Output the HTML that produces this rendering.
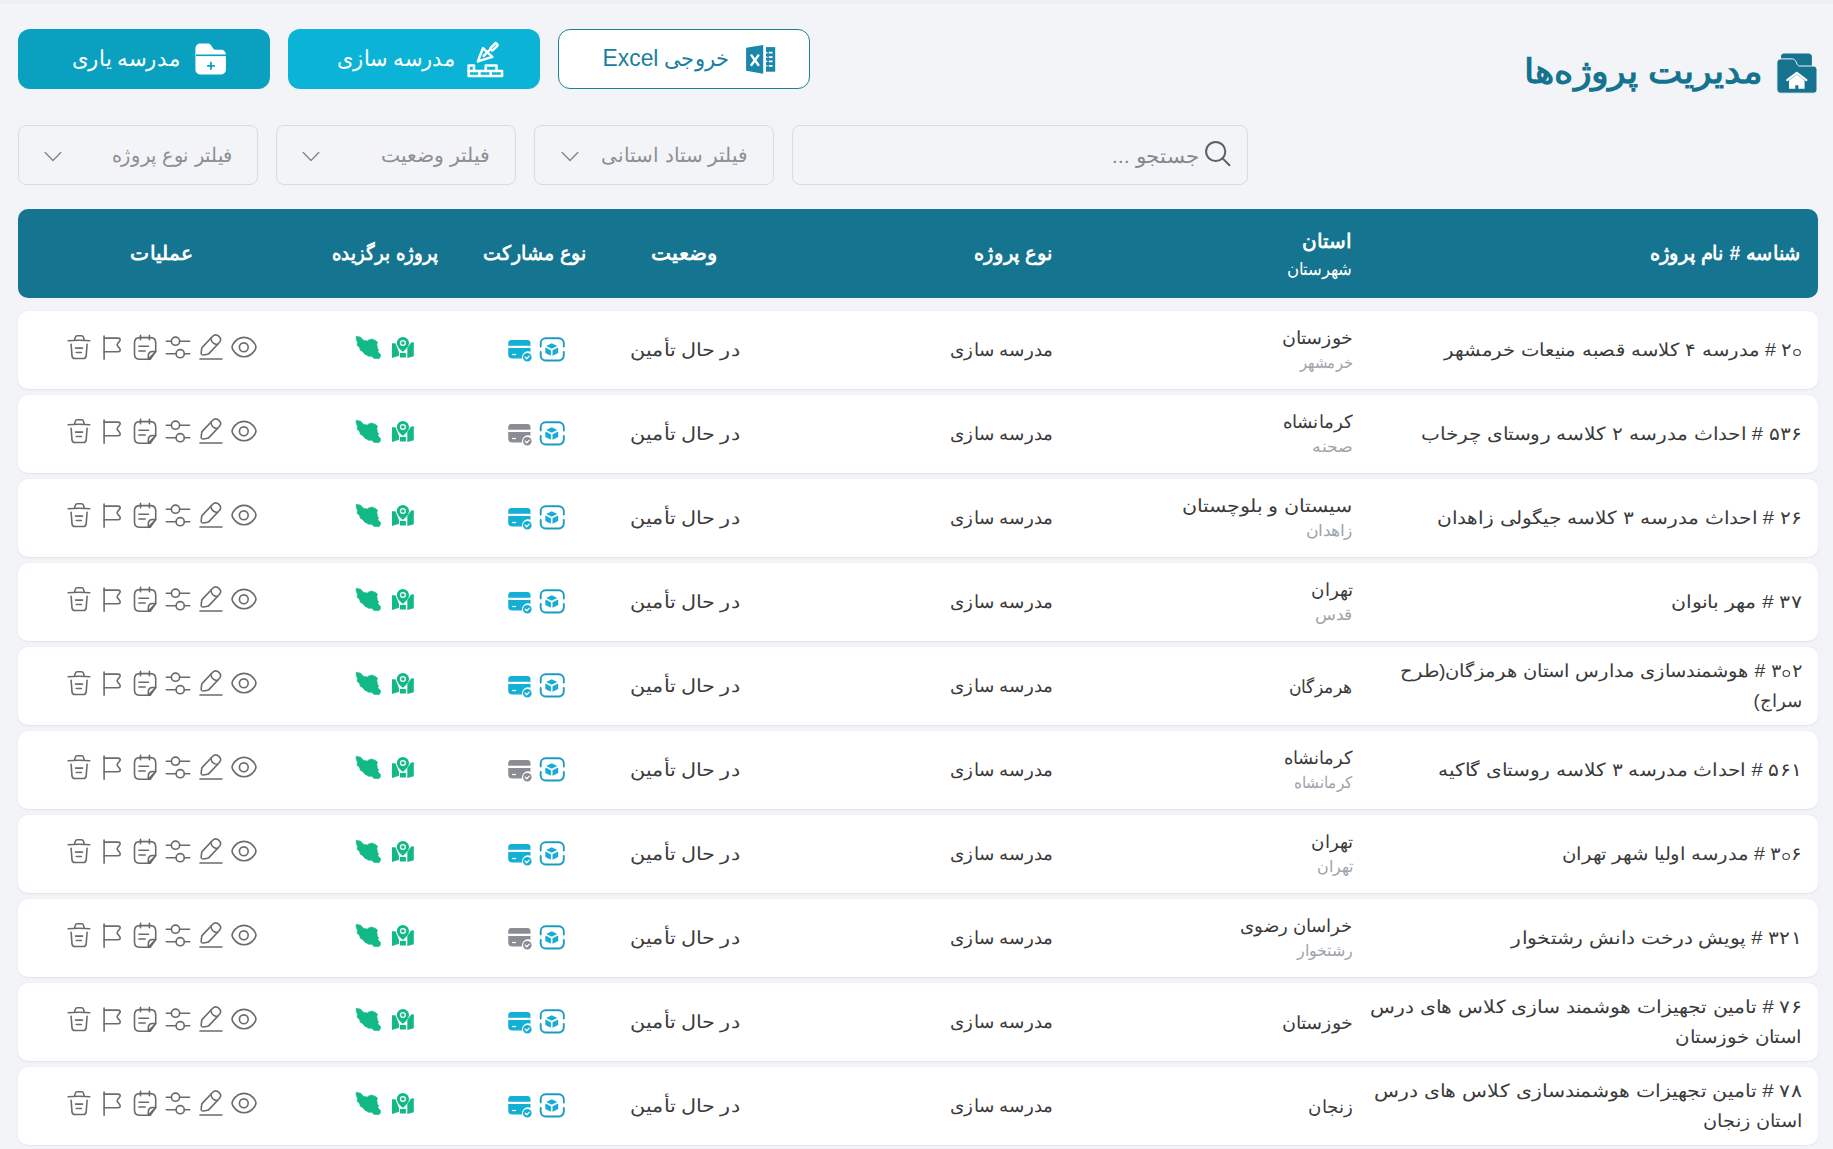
<!DOCTYPE html><html dir="rtl" lang="fa"><head><meta charset="utf-8"><title>مدیریت پروژه‌ها</title><style>
html,body{margin:0;padding:0}
body{width:1833px;height:1149px;position:relative;overflow:hidden;background:#f3f4f8;font-family:"Liberation Sans",sans-serif;direction:rtl}
.topband{position:absolute;left:0;top:0;width:1833px;height:4px;background:#eeeff2}
.t{position:absolute;white-space:nowrap;transform-origin:100% 50%;display:block}
.ic{position:absolute;display:block}
.num{unicode-bidi:isolate;direction:ltr}
.z{display:inline-block;width:7.4px;height:7.4px;box-sizing:border-box;border:1.6px solid currentColor;border-radius:50%;margin:0 1px;vertical-align:0px}
.btn{position:absolute;top:29px;width:252px;height:60px;border-radius:12px;box-sizing:border-box}
.inp{position:absolute;top:125px;height:60px;border:1px solid #d9dbe0;border-radius:8px;box-sizing:border-box}
.thead{position:absolute;left:18px;top:209px;width:1800px;height:89px;background:#15748f;border-radius:10px}
.row{position:absolute;left:18px;width:1800px;height:78px;background:#fff;border-radius:10px;box-shadow:0 0.5px 2px rgba(0,0,0,.07)}
</style></head><body><div class="topband"></div>
<span id="title" class="t" style="right:71.00px;top:54.00px;font-size:34px;line-height:34px;color:#15738f;font-weight:700;transform:scaleX(1.0769);">مدیریت پروژه‌ها</span>
<svg class="ic" style="left:1770px;top:45px" width="55" height="55" viewBox="0 0 55 55">
<path d="M14 8.4h24.4a3.5 3.5 0 0 1 3.5 3.5V24H11V11.4A3 3 0 0 1 14 8.4z" fill="#15738f"/>
<path d="M10 13.9h12.4c1.6 0 2.6 .8 3.3 2.2l1.6 3.4c.5 1.1 1.3 1.5 2.6 1.5h13.7a3.4 3.4 0 0 1 3.4 3.4v20.4a3.4 3.4 0 0 1-3.4 3.4H10.3a3.4 3.4 0 0 1-3.4-3.4V17.3a3.4 3.4 0 0 1 3.1-3.4z" fill="#15738f" stroke="#f3f4f8" stroke-width="1"/>
<path d="M17.2 35.2l9.6-7.4 9.6 7.4" fill="none" stroke="#fff" stroke-width="2.2" stroke-linecap="round" stroke-linejoin="round"/>
<path d="M19 35.4l7.8-6 7.8 6v8.4h-6.3v-3.6h-3v3.6H19z" fill="#fff"/>
</svg>
<div class="btn" style="left:18px;background:#0aa1c1"></div>
<div class="btn" style="left:288px;background:#0bb4d6"></div>
<div class="btn" style="left:558px;background:#fff;border:1px solid #1d7f9b"></div>
<span id="b1" class="t" style="right:1653.00px;top:48.00px;font-size:22px;line-height:22px;color:#fff;font-weight:400;transform:scaleX(0.9643);">مدرسه یاری</span>
<span id="b2" class="t" style="right:1377.70px;top:48.00px;font-size:22px;line-height:22px;color:#fff;font-weight:400;transform:scaleX(0.9516);">مدرسه سازی</span>
<span id="b3" class="t" style="right:1103.30px;top:47.00px;font-size:22px;line-height:22px;color:#1b80a0;font-weight:400;transform:scaleX(0.9507);">خروجی <span style="font-size:24px">Excel</span></span>
<svg class="ic" style="left:190px;top:38px" width="42" height="42" viewBox="0 0 42 42">
<path d="M10 5.6h7.6c1.6 0 2.6.6 3.4 1.7l2.4 3.4c.6.8 1.3 1.1 2.5 1.1h5.4a4.6 4.6 0 0 1 4.6 4.6v15.4a4.6 4.6 0 0 1-4.6 4.6H10a4.6 4.6 0 0 1-4.6-4.6V10.2A4.6 4.6 0 0 1 10 5.6z" fill="#fff"/>
<path d="M6 17.3h30" stroke="#0aa1c1" stroke-width="1.6"/>
<path d="M21 24.6v6.4M17.8 27.8h6.4" stroke="#0aa1c1" stroke-width="1.8" stroke-linecap="round"/>
</svg>
<svg class="ic" style="left:460px;top:35px" width="55" height="50" viewBox="0 0 55 50" fill="none" stroke="#fff" stroke-width="2.5" stroke-linejoin="round" stroke-linecap="round">
<path d="M8.6 35.9h33.5v5.2H8.6zM19.45 35.9v5.2M30.65 35.9v5.2"/>
<path d="M8.6 35.9v-5.4H14v5.4M25.7 35.9v-5.3h10.85v5.3"/>
<path d="M17.9 26.4l5-13.2 9.4 8.7z"/>
<path d="M23.6 21l5.6-5.6"/>
<rect x="-4.05" y="-1.6" width="8.1" height="3.2" rx="1" transform="translate(34 11.8) rotate(-45)"/>
</svg>
<svg class="ic" style="left:740px;top:40px" width="40" height="40" viewBox="0 0 40 40">
<path d="M6.1 7.8L23.2 5v28.8L6.1 30.8z" fill="#1b87aa"/>
<path d="M10.9 14.6l8 11.2M18.9 14.6l-8 11.2" stroke="#fff" stroke-width="2.4"/>
<path d="M26 7.1h9.2v24.6H26z" fill="#1b87aa"/>
<path d="M28.8 12.7h3.8M28.8 17.1h3.8M28.8 21.4h3.8M28.8 25.9h3.8" stroke="#fff" stroke-width="1.8"/>
<path d="M26 12.7h1.4M26 17.1h1.4M26 21.4h1.4M26 25.9h1.4" stroke="#fff" stroke-width="1.4"/>
</svg>
<div class="inp" style="left:792px;width:456px"></div>
<div class="inp" style="left:534px;width:240px"></div>
<div class="inp" style="left:276px;width:240px"></div>
<div class="inp" style="left:18px;width:240px"></div>
<span id="s" class="t" style="right:634.00px;top:146.00px;font-size:20px;line-height:20px;color:#85878c;font-weight:400;transform:scaleX(1.0765);">جستجو ...</span>
<svg class="ic" style="left:1200px;top:136px" width="36" height="36" viewBox="0 0 36 36" fill="none" stroke="#5d6067" stroke-width="2">
<circle cx="15.7" cy="15.5" r="9.6"/><path d="M22.6 22.4l6.9 6.9" stroke-linecap="round"/></svg>
<span id="f1" class="t" style="right:1084.40px;top:145.00px;font-size:20px;line-height:20px;color:#8d8f94;font-weight:400;transform:scaleX(0.9973);">فیلتر ستاد استانی</span>
<span id="f2" class="t" style="right:1342.50px;top:145.00px;font-size:20px;line-height:20px;color:#8d8f94;font-weight:400;transform:scaleX(1.0138);">فیلتر وضعیت</span>
<span id="f3" class="t" style="right:1600.30px;top:145.00px;font-size:20px;line-height:20px;color:#8d8f94;font-weight:400;transform:scaleX(0.9627);">فیلتر نوع پروژه</span>
<svg class="ic" style="left:43.4px;top:146px" width="20" height="20" viewBox="0 0 20 20"><path d="M2.2 6.4l7.8 8 7.8-8" fill="none" stroke="#84868c" stroke-width="1.4" stroke-linecap="round" stroke-linejoin="round"/></svg>
<svg class="ic" style="left:301.4px;top:146px" width="20" height="20" viewBox="0 0 20 20"><path d="M2.2 6.4l7.8 8 7.8-8" fill="none" stroke="#84868c" stroke-width="1.4" stroke-linecap="round" stroke-linejoin="round"/></svg>
<svg class="ic" style="left:559.5px;top:146px" width="20" height="20" viewBox="0 0 20 20"><path d="M2.2 6.4l7.8 8 7.8-8" fill="none" stroke="#84868c" stroke-width="1.4" stroke-linecap="round" stroke-linejoin="round"/></svg>
<div class="thead"></div>
<span id="h1" class="t" style="right:32.00px;top:243.00px;font-size:20px;line-height:20px;color:#fff;font-weight:700;transform:scaleX(0.9679);">شناسه # نام پروژه</span>
<span id="h2" class="t" style="right:481.00px;top:231.00px;font-size:20px;line-height:20px;color:#fff;font-weight:700;transform:scaleX(1.0000);">استان</span>
<span id="h2b" class="t" style="right:481.00px;top:261.00px;font-size:17px;line-height:17px;color:#fff;font-weight:400;transform:scaleX(0.9701);">شهرستان</span>
<span id="h3" class="t" style="right:780.00px;top:243.00px;font-size:20px;line-height:20px;color:#fff;font-weight:700;transform:scaleX(0.9691);">نوع پروژه</span>
<span id="h4" class="t" style="right:1115.00px;top:243.00px;font-size:20px;line-height:20px;color:#fff;font-weight:700;transform:scaleX(1.0635);">وضعیت</span>
<span id="h5" class="t" style="right:1246.00px;top:243.00px;font-size:20px;line-height:20px;color:#fff;font-weight:700;transform:scaleX(0.9495);">نوع مشارکت</span>
<span id="h6" class="t" style="right:1394.00px;top:243.00px;font-size:20px;line-height:20px;color:#fff;font-weight:700;transform:scaleX(0.9068);">پروژه برگزیده</span>
<span id="h7" class="t" style="right:1640.30px;top:243.00px;font-size:20px;line-height:20px;color:#fff;font-weight:700;transform:scaleX(1.0113);">عملیات</span>
<div class="row" style="top:311px"></div>
<svg class="ic" style="left:64px;top:330px" width="200" height="36" viewBox="0 0 200 36" fill="none" stroke="#6b6b6b" stroke-width="1.6" stroke-linecap="round" stroke-linejoin="round">
<path d="M4.2 10.8c7-.7 14.4-.8 21.5 0"/><path d="M10.6 10.2l.6-2.6c.3-1.2.8-1.8 2.2-1.8h4c1.4 0 1.9.6 2.2 1.8l.6 2.6"/>
<path d="M7.1 14.2l.9 11.6c.2 1.8.6 2.7 3 2.7h8.2c2.4 0 2.8-.9 3-2.7l.9-11.6"/><path d="M11.5 18.1h7.1M12.3 22.5h5"/>
<path d="M40.1 6v23.3"/><path d="M40.1 8.1h13.6c2.6 0 3.3 1.4 1.6 3.4l-1.5 1.8c-.8 1-.8 2 0 3l1.5 1.8c1.7 2 1 3.6-1.6 3.6H40.1"/>
<path d="M76.5 5.2v4.6M85.4 5.2v4.6"/><path d="M86.2 29.3H75.8c-3.6 0-5.3-2-5.3-5.3V12.8c0-3.2 1.7-5.2 5.3-5.2h10.6c3.6 0 5.3 2 5.3 5.2v8.7z"/>
<path d="M91.7 21.5l-7.4 7.8v-3.2c0-3 1.4-4.6 4.4-4.6z"/><path d="M74.9 16.2h9.7M74.9 21h6.3"/>
<path d="M6.3 11.2h5M19.6 11.2h10.1M6.3 23.7h9.8M24.3 23.7h5.4" transform="translate(96 0)"/>
<circle cx="111.5" cy="11.2" r="4.1"/><circle cx="116.2" cy="23.7" r="4.1"/>
<g transform="translate(132.3 2.1) scale(1.22)" stroke-width="1.31"><path d="M13.26 3.6L5.05 12.29c-.31.33-.61.98-.67 1.43l-.37 3.24c-.13 1.17.71 1.97 1.87 1.77l3.22-.55c.45-.08 1.08-.41 1.39-.75l8.21-8.69c1.42-1.5 2.06-3.21-.15-5.3-2.2-2.07-3.87-1.34-5.29.16z"/><path d="M11.89 5.05a6.126 6.126 0 0 0 5.45 5.15M3 22h18"/></g>
<circle cx="179.8" cy="17.3" r="4.4"/>
<path d="M180 26.8c4.3 0 8.2-2.5 11-6.8 1-1.6 1-4.2 0-5.8-2.8-4.3-6.7-6.8-11-6.8s-8.2 2.5-11 6.8c-1 1.6-1 4.2 0 5.8 2.8 4.3 6.7 6.8 11 6.8z"/>
</svg>
<svg class="ic" style="left:350px;top:330px" width="70" height="35" viewBox="0 0 70 35">
<path d="M6.2 6.2L10.6 7.2 11.9 8.5 13.7 10.6 17.7 10.9 19 9.8 21.8 9 25.5 10.4 27.6 12.2 26.8 14.3 27.6 18.7 28.6 19.8 27.8 21.8 30.7 24.7 30.2 27.1 29.2 28.6 23.9 28.4 21.8 26.3 18.7 26.3 14.5 23.9 13 21.8 10.4 20.3 9.6 17.7 7 15.1 7.5 12.4 6.2 9.3z" fill="#12b986" stroke="#12b986" stroke-width="0.6" stroke-linejoin="round"/>
<path d="M52.9 6.9a6.1 6.1 0 0 0-6.1 6.1c0 3.6 3.4 6.6 6.1 8.8 2.7-2.2 6.1-5.2 6.1-8.8a6.1 6.1 0 0 0-6.1-6.1z" fill="#12b986"/>
<circle cx="52.9" cy="13" r="2.4" fill="none" stroke="#fff" stroke-width="1.3"/>
<path d="M42 13.2h3.4l3.6 8.8v3.7L42 27.9z" fill="#12b986"/>
<path d="M50 22.9h5.9v4.6H50z" fill="#12b986"/>
<path d="M57.3 18l3.8-5.4 2.7-.4v14.1l-6.5 1.6z" fill="#12b986"/>
</svg>
<svg class="ic" style="left:500px;top:330px" width="70" height="40" viewBox="0 0 70 40">
<path d="M11.4 10.1h15.9a3.2 3.2 0 0 1 3.2 3.2v2.4H8.2v-2.4a3.2 3.2 0 0 1 3.2-3.2z" fill="#14b0d4"/>
<path d="M8.2 18.1h22.3v3.6a6.3 6.3 0 0 0-8.5 6.9H12.2a4 4 0 0 1-4-4z" fill="#14b0d4"/>
<path d="M12 24.5h4" stroke="#fff" stroke-width="1.2"/>
<circle cx="27.3" cy="27.3" r="4.3" fill="#14b0d4"/>
<path d="M25.3 27.3l1.4 1.4 2.6-2.6" fill="none" stroke="#fff" stroke-width="1.3" stroke-linecap="round" stroke-linejoin="round"/>
<path d="M40.7 16.6v-3.4a5 5 0 0 1 5-5h13.1a5 5 0 0 1 5 5v3.4M40.7 22v3.5a5 5 0 0 0 5 5h13.1a5 5 0 0 0 5-5V22" fill="none" stroke="#1c9cc2" stroke-width="1.9" stroke-linecap="round"/>
<path d="M46.2 16l5.5-2.8 5.6 2.8-5.6 2.8z" fill="#17acd8"/>
<path d="M45.3 17.4l5.6 2.9v5.5l-5.6-2.9z" fill="#17acd8"/>
<path d="M52.5 20.3l5.7-2.9v5.6l-5.7 2.8z" fill="#17acd8"/>
</svg>
<span id="st0" class="t" style="right:1093.30px;top:341.00px;font-size:18px;line-height:18px;color:#3b3b3b;font-weight:400;transform:scaleX(1.1547);">در حال تأمین</span>
<span id="ty0" class="t" style="right:780.20px;top:341.00px;font-size:18px;line-height:18px;color:#3b3b3b;font-weight:400;transform:scaleX(1.0178);">مدرسه سازی</span>
<span id="pv0" class="t" style="right:480.50px;top:329.00px;font-size:18px;line-height:18px;color:#3b3b3b;font-weight:400;transform:scaleX(1.0597);">خوزستان</span>
<span id="ct0" class="t" style="right:480.50px;top:355.00px;font-size:16px;line-height:16px;color:#a0a4ab;font-weight:400;transform:scaleX(0.9138);">خرمشهر</span>
<span id="nm0" class="t" style="right:31.00px;top:341.00px;font-size:18px;line-height:18px;color:#3b3b3b;font-weight:400;transform:scaleX(1.0899);"><span class='num'>۲<i class='z'></i></span> # مدرسه ۴ کلاسه قصبه منیعات خرمشهر</span>
<div class="row" style="top:395px"></div>
<svg class="ic" style="left:64px;top:414px" width="200" height="36" viewBox="0 0 200 36" fill="none" stroke="#6b6b6b" stroke-width="1.6" stroke-linecap="round" stroke-linejoin="round">
<path d="M4.2 10.8c7-.7 14.4-.8 21.5 0"/><path d="M10.6 10.2l.6-2.6c.3-1.2.8-1.8 2.2-1.8h4c1.4 0 1.9.6 2.2 1.8l.6 2.6"/>
<path d="M7.1 14.2l.9 11.6c.2 1.8.6 2.7 3 2.7h8.2c2.4 0 2.8-.9 3-2.7l.9-11.6"/><path d="M11.5 18.1h7.1M12.3 22.5h5"/>
<path d="M40.1 6v23.3"/><path d="M40.1 8.1h13.6c2.6 0 3.3 1.4 1.6 3.4l-1.5 1.8c-.8 1-.8 2 0 3l1.5 1.8c1.7 2 1 3.6-1.6 3.6H40.1"/>
<path d="M76.5 5.2v4.6M85.4 5.2v4.6"/><path d="M86.2 29.3H75.8c-3.6 0-5.3-2-5.3-5.3V12.8c0-3.2 1.7-5.2 5.3-5.2h10.6c3.6 0 5.3 2 5.3 5.2v8.7z"/>
<path d="M91.7 21.5l-7.4 7.8v-3.2c0-3 1.4-4.6 4.4-4.6z"/><path d="M74.9 16.2h9.7M74.9 21h6.3"/>
<path d="M6.3 11.2h5M19.6 11.2h10.1M6.3 23.7h9.8M24.3 23.7h5.4" transform="translate(96 0)"/>
<circle cx="111.5" cy="11.2" r="4.1"/><circle cx="116.2" cy="23.7" r="4.1"/>
<g transform="translate(132.3 2.1) scale(1.22)" stroke-width="1.31"><path d="M13.26 3.6L5.05 12.29c-.31.33-.61.98-.67 1.43l-.37 3.24c-.13 1.17.71 1.97 1.87 1.77l3.22-.55c.45-.08 1.08-.41 1.39-.75l8.21-8.69c1.42-1.5 2.06-3.21-.15-5.3-2.2-2.07-3.87-1.34-5.29.16z"/><path d="M11.89 5.05a6.126 6.126 0 0 0 5.45 5.15M3 22h18"/></g>
<circle cx="179.8" cy="17.3" r="4.4"/>
<path d="M180 26.8c4.3 0 8.2-2.5 11-6.8 1-1.6 1-4.2 0-5.8-2.8-4.3-6.7-6.8-11-6.8s-8.2 2.5-11 6.8c-1 1.6-1 4.2 0 5.8 2.8 4.3 6.7 6.8 11 6.8z"/>
</svg>
<svg class="ic" style="left:350px;top:414px" width="70" height="35" viewBox="0 0 70 35">
<path d="M6.2 6.2L10.6 7.2 11.9 8.5 13.7 10.6 17.7 10.9 19 9.8 21.8 9 25.5 10.4 27.6 12.2 26.8 14.3 27.6 18.7 28.6 19.8 27.8 21.8 30.7 24.7 30.2 27.1 29.2 28.6 23.9 28.4 21.8 26.3 18.7 26.3 14.5 23.9 13 21.8 10.4 20.3 9.6 17.7 7 15.1 7.5 12.4 6.2 9.3z" fill="#12b986" stroke="#12b986" stroke-width="0.6" stroke-linejoin="round"/>
<path d="M52.9 6.9a6.1 6.1 0 0 0-6.1 6.1c0 3.6 3.4 6.6 6.1 8.8 2.7-2.2 6.1-5.2 6.1-8.8a6.1 6.1 0 0 0-6.1-6.1z" fill="#12b986"/>
<circle cx="52.9" cy="13" r="2.4" fill="none" stroke="#fff" stroke-width="1.3"/>
<path d="M42 13.2h3.4l3.6 8.8v3.7L42 27.9z" fill="#12b986"/>
<path d="M50 22.9h5.9v4.6H50z" fill="#12b986"/>
<path d="M57.3 18l3.8-5.4 2.7-.4v14.1l-6.5 1.6z" fill="#12b986"/>
</svg>
<svg class="ic" style="left:500px;top:414px" width="70" height="40" viewBox="0 0 70 40">
<path d="M11.4 10.1h15.9a3.2 3.2 0 0 1 3.2 3.2v2.4H8.2v-2.4a3.2 3.2 0 0 1 3.2-3.2z" fill="#8a8d93"/>
<path d="M8.2 18.1h22.3v3.6a6.3 6.3 0 0 0-8.5 6.9H12.2a4 4 0 0 1-4-4z" fill="#8a8d93"/>
<path d="M12 24.5h4" stroke="#fff" stroke-width="1.2"/>
<circle cx="27.3" cy="27.3" r="4.3" fill="#8a8d93"/>
<path d="M25.3 27.3l1.4 1.4 2.6-2.6" fill="none" stroke="#fff" stroke-width="1.3" stroke-linecap="round" stroke-linejoin="round"/>
<path d="M40.7 16.6v-3.4a5 5 0 0 1 5-5h13.1a5 5 0 0 1 5 5v3.4M40.7 22v3.5a5 5 0 0 0 5 5h13.1a5 5 0 0 0 5-5V22" fill="none" stroke="#1c9cc2" stroke-width="1.9" stroke-linecap="round"/>
<path d="M46.2 16l5.5-2.8 5.6 2.8-5.6 2.8z" fill="#17acd8"/>
<path d="M45.3 17.4l5.6 2.9v5.5l-5.6-2.9z" fill="#17acd8"/>
<path d="M52.5 20.3l5.7-2.9v5.6l-5.7 2.8z" fill="#17acd8"/>
</svg>
<span id="st1" class="t" style="right:1093.30px;top:425.00px;font-size:18px;line-height:18px;color:#3b3b3b;font-weight:400;transform:scaleX(1.1547);">در حال تأمین</span>
<span id="ty1" class="t" style="right:780.20px;top:425.00px;font-size:18px;line-height:18px;color:#3b3b3b;font-weight:400;transform:scaleX(1.0178);">مدرسه سازی</span>
<span id="pv1" class="t" style="right:480.50px;top:413.00px;font-size:18px;line-height:18px;color:#3b3b3b;font-weight:400;transform:scaleX(1.0145);">کرمانشاه</span>
<span id="ct1" class="t" style="right:480.50px;top:439.00px;font-size:16px;line-height:16px;color:#a0a4ab;font-weight:400;transform:scaleX(1.0789);">صحنه</span>
<span id="nm1" class="t" style="right:31.00px;top:425.00px;font-size:18px;line-height:18px;color:#3b3b3b;font-weight:400;transform:scaleX(1.1173);">۵۳۶ # احداث مدرسه ۲ کلاسه روستای چرخاب</span>
<div class="row" style="top:479px"></div>
<svg class="ic" style="left:64px;top:498px" width="200" height="36" viewBox="0 0 200 36" fill="none" stroke="#6b6b6b" stroke-width="1.6" stroke-linecap="round" stroke-linejoin="round">
<path d="M4.2 10.8c7-.7 14.4-.8 21.5 0"/><path d="M10.6 10.2l.6-2.6c.3-1.2.8-1.8 2.2-1.8h4c1.4 0 1.9.6 2.2 1.8l.6 2.6"/>
<path d="M7.1 14.2l.9 11.6c.2 1.8.6 2.7 3 2.7h8.2c2.4 0 2.8-.9 3-2.7l.9-11.6"/><path d="M11.5 18.1h7.1M12.3 22.5h5"/>
<path d="M40.1 6v23.3"/><path d="M40.1 8.1h13.6c2.6 0 3.3 1.4 1.6 3.4l-1.5 1.8c-.8 1-.8 2 0 3l1.5 1.8c1.7 2 1 3.6-1.6 3.6H40.1"/>
<path d="M76.5 5.2v4.6M85.4 5.2v4.6"/><path d="M86.2 29.3H75.8c-3.6 0-5.3-2-5.3-5.3V12.8c0-3.2 1.7-5.2 5.3-5.2h10.6c3.6 0 5.3 2 5.3 5.2v8.7z"/>
<path d="M91.7 21.5l-7.4 7.8v-3.2c0-3 1.4-4.6 4.4-4.6z"/><path d="M74.9 16.2h9.7M74.9 21h6.3"/>
<path d="M6.3 11.2h5M19.6 11.2h10.1M6.3 23.7h9.8M24.3 23.7h5.4" transform="translate(96 0)"/>
<circle cx="111.5" cy="11.2" r="4.1"/><circle cx="116.2" cy="23.7" r="4.1"/>
<g transform="translate(132.3 2.1) scale(1.22)" stroke-width="1.31"><path d="M13.26 3.6L5.05 12.29c-.31.33-.61.98-.67 1.43l-.37 3.24c-.13 1.17.71 1.97 1.87 1.77l3.22-.55c.45-.08 1.08-.41 1.39-.75l8.21-8.69c1.42-1.5 2.06-3.21-.15-5.3-2.2-2.07-3.87-1.34-5.29.16z"/><path d="M11.89 5.05a6.126 6.126 0 0 0 5.45 5.15M3 22h18"/></g>
<circle cx="179.8" cy="17.3" r="4.4"/>
<path d="M180 26.8c4.3 0 8.2-2.5 11-6.8 1-1.6 1-4.2 0-5.8-2.8-4.3-6.7-6.8-11-6.8s-8.2 2.5-11 6.8c-1 1.6-1 4.2 0 5.8 2.8 4.3 6.7 6.8 11 6.8z"/>
</svg>
<svg class="ic" style="left:350px;top:498px" width="70" height="35" viewBox="0 0 70 35">
<path d="M6.2 6.2L10.6 7.2 11.9 8.5 13.7 10.6 17.7 10.9 19 9.8 21.8 9 25.5 10.4 27.6 12.2 26.8 14.3 27.6 18.7 28.6 19.8 27.8 21.8 30.7 24.7 30.2 27.1 29.2 28.6 23.9 28.4 21.8 26.3 18.7 26.3 14.5 23.9 13 21.8 10.4 20.3 9.6 17.7 7 15.1 7.5 12.4 6.2 9.3z" fill="#12b986" stroke="#12b986" stroke-width="0.6" stroke-linejoin="round"/>
<path d="M52.9 6.9a6.1 6.1 0 0 0-6.1 6.1c0 3.6 3.4 6.6 6.1 8.8 2.7-2.2 6.1-5.2 6.1-8.8a6.1 6.1 0 0 0-6.1-6.1z" fill="#12b986"/>
<circle cx="52.9" cy="13" r="2.4" fill="none" stroke="#fff" stroke-width="1.3"/>
<path d="M42 13.2h3.4l3.6 8.8v3.7L42 27.9z" fill="#12b986"/>
<path d="M50 22.9h5.9v4.6H50z" fill="#12b986"/>
<path d="M57.3 18l3.8-5.4 2.7-.4v14.1l-6.5 1.6z" fill="#12b986"/>
</svg>
<svg class="ic" style="left:500px;top:498px" width="70" height="40" viewBox="0 0 70 40">
<path d="M11.4 10.1h15.9a3.2 3.2 0 0 1 3.2 3.2v2.4H8.2v-2.4a3.2 3.2 0 0 1 3.2-3.2z" fill="#14b0d4"/>
<path d="M8.2 18.1h22.3v3.6a6.3 6.3 0 0 0-8.5 6.9H12.2a4 4 0 0 1-4-4z" fill="#14b0d4"/>
<path d="M12 24.5h4" stroke="#fff" stroke-width="1.2"/>
<circle cx="27.3" cy="27.3" r="4.3" fill="#14b0d4"/>
<path d="M25.3 27.3l1.4 1.4 2.6-2.6" fill="none" stroke="#fff" stroke-width="1.3" stroke-linecap="round" stroke-linejoin="round"/>
<path d="M40.7 16.6v-3.4a5 5 0 0 1 5-5h13.1a5 5 0 0 1 5 5v3.4M40.7 22v3.5a5 5 0 0 0 5 5h13.1a5 5 0 0 0 5-5V22" fill="none" stroke="#1c9cc2" stroke-width="1.9" stroke-linecap="round"/>
<path d="M46.2 16l5.5-2.8 5.6 2.8-5.6 2.8z" fill="#17acd8"/>
<path d="M45.3 17.4l5.6 2.9v5.5l-5.6-2.9z" fill="#17acd8"/>
<path d="M52.5 20.3l5.7-2.9v5.6l-5.7 2.8z" fill="#17acd8"/>
</svg>
<span id="st2" class="t" style="right:1093.30px;top:509.00px;font-size:18px;line-height:18px;color:#3b3b3b;font-weight:400;transform:scaleX(1.1547);">در حال تأمین</span>
<span id="ty2" class="t" style="right:780.20px;top:509.00px;font-size:18px;line-height:18px;color:#3b3b3b;font-weight:400;transform:scaleX(1.0178);">مدرسه سازی</span>
<span id="pv2" class="t" style="right:480.50px;top:497.00px;font-size:18px;line-height:18px;color:#3b3b3b;font-weight:400;transform:scaleX(1.1453);">سیستان و بلوچستان</span>
<span id="ct2" class="t" style="right:480.50px;top:523.00px;font-size:16px;line-height:16px;color:#a0a4ab;font-weight:400;transform:scaleX(1.0795);">زاهدان</span>
<span id="nm2" class="t" style="right:31.00px;top:509.00px;font-size:18px;line-height:18px;color:#3b3b3b;font-weight:400;transform:scaleX(1.1196);">۲۶ # احداث مدرسه ۳ کلاسه جیگولی زاهدان</span>
<div class="row" style="top:563px"></div>
<svg class="ic" style="left:64px;top:582px" width="200" height="36" viewBox="0 0 200 36" fill="none" stroke="#6b6b6b" stroke-width="1.6" stroke-linecap="round" stroke-linejoin="round">
<path d="M4.2 10.8c7-.7 14.4-.8 21.5 0"/><path d="M10.6 10.2l.6-2.6c.3-1.2.8-1.8 2.2-1.8h4c1.4 0 1.9.6 2.2 1.8l.6 2.6"/>
<path d="M7.1 14.2l.9 11.6c.2 1.8.6 2.7 3 2.7h8.2c2.4 0 2.8-.9 3-2.7l.9-11.6"/><path d="M11.5 18.1h7.1M12.3 22.5h5"/>
<path d="M40.1 6v23.3"/><path d="M40.1 8.1h13.6c2.6 0 3.3 1.4 1.6 3.4l-1.5 1.8c-.8 1-.8 2 0 3l1.5 1.8c1.7 2 1 3.6-1.6 3.6H40.1"/>
<path d="M76.5 5.2v4.6M85.4 5.2v4.6"/><path d="M86.2 29.3H75.8c-3.6 0-5.3-2-5.3-5.3V12.8c0-3.2 1.7-5.2 5.3-5.2h10.6c3.6 0 5.3 2 5.3 5.2v8.7z"/>
<path d="M91.7 21.5l-7.4 7.8v-3.2c0-3 1.4-4.6 4.4-4.6z"/><path d="M74.9 16.2h9.7M74.9 21h6.3"/>
<path d="M6.3 11.2h5M19.6 11.2h10.1M6.3 23.7h9.8M24.3 23.7h5.4" transform="translate(96 0)"/>
<circle cx="111.5" cy="11.2" r="4.1"/><circle cx="116.2" cy="23.7" r="4.1"/>
<g transform="translate(132.3 2.1) scale(1.22)" stroke-width="1.31"><path d="M13.26 3.6L5.05 12.29c-.31.33-.61.98-.67 1.43l-.37 3.24c-.13 1.17.71 1.97 1.87 1.77l3.22-.55c.45-.08 1.08-.41 1.39-.75l8.21-8.69c1.42-1.5 2.06-3.21-.15-5.3-2.2-2.07-3.87-1.34-5.29.16z"/><path d="M11.89 5.05a6.126 6.126 0 0 0 5.45 5.15M3 22h18"/></g>
<circle cx="179.8" cy="17.3" r="4.4"/>
<path d="M180 26.8c4.3 0 8.2-2.5 11-6.8 1-1.6 1-4.2 0-5.8-2.8-4.3-6.7-6.8-11-6.8s-8.2 2.5-11 6.8c-1 1.6-1 4.2 0 5.8 2.8 4.3 6.7 6.8 11 6.8z"/>
</svg>
<svg class="ic" style="left:350px;top:582px" width="70" height="35" viewBox="0 0 70 35">
<path d="M6.2 6.2L10.6 7.2 11.9 8.5 13.7 10.6 17.7 10.9 19 9.8 21.8 9 25.5 10.4 27.6 12.2 26.8 14.3 27.6 18.7 28.6 19.8 27.8 21.8 30.7 24.7 30.2 27.1 29.2 28.6 23.9 28.4 21.8 26.3 18.7 26.3 14.5 23.9 13 21.8 10.4 20.3 9.6 17.7 7 15.1 7.5 12.4 6.2 9.3z" fill="#12b986" stroke="#12b986" stroke-width="0.6" stroke-linejoin="round"/>
<path d="M52.9 6.9a6.1 6.1 0 0 0-6.1 6.1c0 3.6 3.4 6.6 6.1 8.8 2.7-2.2 6.1-5.2 6.1-8.8a6.1 6.1 0 0 0-6.1-6.1z" fill="#12b986"/>
<circle cx="52.9" cy="13" r="2.4" fill="none" stroke="#fff" stroke-width="1.3"/>
<path d="M42 13.2h3.4l3.6 8.8v3.7L42 27.9z" fill="#12b986"/>
<path d="M50 22.9h5.9v4.6H50z" fill="#12b986"/>
<path d="M57.3 18l3.8-5.4 2.7-.4v14.1l-6.5 1.6z" fill="#12b986"/>
</svg>
<svg class="ic" style="left:500px;top:582px" width="70" height="40" viewBox="0 0 70 40">
<path d="M11.4 10.1h15.9a3.2 3.2 0 0 1 3.2 3.2v2.4H8.2v-2.4a3.2 3.2 0 0 1 3.2-3.2z" fill="#14b0d4"/>
<path d="M8.2 18.1h22.3v3.6a6.3 6.3 0 0 0-8.5 6.9H12.2a4 4 0 0 1-4-4z" fill="#14b0d4"/>
<path d="M12 24.5h4" stroke="#fff" stroke-width="1.2"/>
<circle cx="27.3" cy="27.3" r="4.3" fill="#14b0d4"/>
<path d="M25.3 27.3l1.4 1.4 2.6-2.6" fill="none" stroke="#fff" stroke-width="1.3" stroke-linecap="round" stroke-linejoin="round"/>
<path d="M40.7 16.6v-3.4a5 5 0 0 1 5-5h13.1a5 5 0 0 1 5 5v3.4M40.7 22v3.5a5 5 0 0 0 5 5h13.1a5 5 0 0 0 5-5V22" fill="none" stroke="#1c9cc2" stroke-width="1.9" stroke-linecap="round"/>
<path d="M46.2 16l5.5-2.8 5.6 2.8-5.6 2.8z" fill="#17acd8"/>
<path d="M45.3 17.4l5.6 2.9v5.5l-5.6-2.9z" fill="#17acd8"/>
<path d="M52.5 20.3l5.7-2.9v5.6l-5.7 2.8z" fill="#17acd8"/>
</svg>
<span id="st3" class="t" style="right:1093.30px;top:593.00px;font-size:18px;line-height:18px;color:#3b3b3b;font-weight:400;transform:scaleX(1.1547);">در حال تأمین</span>
<span id="ty3" class="t" style="right:780.20px;top:593.00px;font-size:18px;line-height:18px;color:#3b3b3b;font-weight:400;transform:scaleX(1.0178);">مدرسه سازی</span>
<span id="pv3" class="t" style="right:480.50px;top:581.00px;font-size:18px;line-height:18px;color:#3b3b3b;font-weight:400;transform:scaleX(1.0122);">تهران</span>
<span id="ct3" class="t" style="right:480.50px;top:607.00px;font-size:16px;line-height:16px;color:#a0a4ab;font-weight:400;transform:scaleX(1.0694);">قدس</span>
<span id="nm3" class="t" style="right:31.00px;top:593.00px;font-size:18px;line-height:18px;color:#3b3b3b;font-weight:400;transform:scaleX(1.1391);">۳۷ # مهر بانوان</span>
<div class="row" style="top:647px"></div>
<svg class="ic" style="left:64px;top:666px" width="200" height="36" viewBox="0 0 200 36" fill="none" stroke="#6b6b6b" stroke-width="1.6" stroke-linecap="round" stroke-linejoin="round">
<path d="M4.2 10.8c7-.7 14.4-.8 21.5 0"/><path d="M10.6 10.2l.6-2.6c.3-1.2.8-1.8 2.2-1.8h4c1.4 0 1.9.6 2.2 1.8l.6 2.6"/>
<path d="M7.1 14.2l.9 11.6c.2 1.8.6 2.7 3 2.7h8.2c2.4 0 2.8-.9 3-2.7l.9-11.6"/><path d="M11.5 18.1h7.1M12.3 22.5h5"/>
<path d="M40.1 6v23.3"/><path d="M40.1 8.1h13.6c2.6 0 3.3 1.4 1.6 3.4l-1.5 1.8c-.8 1-.8 2 0 3l1.5 1.8c1.7 2 1 3.6-1.6 3.6H40.1"/>
<path d="M76.5 5.2v4.6M85.4 5.2v4.6"/><path d="M86.2 29.3H75.8c-3.6 0-5.3-2-5.3-5.3V12.8c0-3.2 1.7-5.2 5.3-5.2h10.6c3.6 0 5.3 2 5.3 5.2v8.7z"/>
<path d="M91.7 21.5l-7.4 7.8v-3.2c0-3 1.4-4.6 4.4-4.6z"/><path d="M74.9 16.2h9.7M74.9 21h6.3"/>
<path d="M6.3 11.2h5M19.6 11.2h10.1M6.3 23.7h9.8M24.3 23.7h5.4" transform="translate(96 0)"/>
<circle cx="111.5" cy="11.2" r="4.1"/><circle cx="116.2" cy="23.7" r="4.1"/>
<g transform="translate(132.3 2.1) scale(1.22)" stroke-width="1.31"><path d="M13.26 3.6L5.05 12.29c-.31.33-.61.98-.67 1.43l-.37 3.24c-.13 1.17.71 1.97 1.87 1.77l3.22-.55c.45-.08 1.08-.41 1.39-.75l8.21-8.69c1.42-1.5 2.06-3.21-.15-5.3-2.2-2.07-3.87-1.34-5.29.16z"/><path d="M11.89 5.05a6.126 6.126 0 0 0 5.45 5.15M3 22h18"/></g>
<circle cx="179.8" cy="17.3" r="4.4"/>
<path d="M180 26.8c4.3 0 8.2-2.5 11-6.8 1-1.6 1-4.2 0-5.8-2.8-4.3-6.7-6.8-11-6.8s-8.2 2.5-11 6.8c-1 1.6-1 4.2 0 5.8 2.8 4.3 6.7 6.8 11 6.8z"/>
</svg>
<svg class="ic" style="left:350px;top:666px" width="70" height="35" viewBox="0 0 70 35">
<path d="M6.2 6.2L10.6 7.2 11.9 8.5 13.7 10.6 17.7 10.9 19 9.8 21.8 9 25.5 10.4 27.6 12.2 26.8 14.3 27.6 18.7 28.6 19.8 27.8 21.8 30.7 24.7 30.2 27.1 29.2 28.6 23.9 28.4 21.8 26.3 18.7 26.3 14.5 23.9 13 21.8 10.4 20.3 9.6 17.7 7 15.1 7.5 12.4 6.2 9.3z" fill="#12b986" stroke="#12b986" stroke-width="0.6" stroke-linejoin="round"/>
<path d="M52.9 6.9a6.1 6.1 0 0 0-6.1 6.1c0 3.6 3.4 6.6 6.1 8.8 2.7-2.2 6.1-5.2 6.1-8.8a6.1 6.1 0 0 0-6.1-6.1z" fill="#12b986"/>
<circle cx="52.9" cy="13" r="2.4" fill="none" stroke="#fff" stroke-width="1.3"/>
<path d="M42 13.2h3.4l3.6 8.8v3.7L42 27.9z" fill="#12b986"/>
<path d="M50 22.9h5.9v4.6H50z" fill="#12b986"/>
<path d="M57.3 18l3.8-5.4 2.7-.4v14.1l-6.5 1.6z" fill="#12b986"/>
</svg>
<svg class="ic" style="left:500px;top:666px" width="70" height="40" viewBox="0 0 70 40">
<path d="M11.4 10.1h15.9a3.2 3.2 0 0 1 3.2 3.2v2.4H8.2v-2.4a3.2 3.2 0 0 1 3.2-3.2z" fill="#14b0d4"/>
<path d="M8.2 18.1h22.3v3.6a6.3 6.3 0 0 0-8.5 6.9H12.2a4 4 0 0 1-4-4z" fill="#14b0d4"/>
<path d="M12 24.5h4" stroke="#fff" stroke-width="1.2"/>
<circle cx="27.3" cy="27.3" r="4.3" fill="#14b0d4"/>
<path d="M25.3 27.3l1.4 1.4 2.6-2.6" fill="none" stroke="#fff" stroke-width="1.3" stroke-linecap="round" stroke-linejoin="round"/>
<path d="M40.7 16.6v-3.4a5 5 0 0 1 5-5h13.1a5 5 0 0 1 5 5v3.4M40.7 22v3.5a5 5 0 0 0 5 5h13.1a5 5 0 0 0 5-5V22" fill="none" stroke="#1c9cc2" stroke-width="1.9" stroke-linecap="round"/>
<path d="M46.2 16l5.5-2.8 5.6 2.8-5.6 2.8z" fill="#17acd8"/>
<path d="M45.3 17.4l5.6 2.9v5.5l-5.6-2.9z" fill="#17acd8"/>
<path d="M52.5 20.3l5.7-2.9v5.6l-5.7 2.8z" fill="#17acd8"/>
</svg>
<span id="st4" class="t" style="right:1093.30px;top:677.00px;font-size:18px;line-height:18px;color:#3b3b3b;font-weight:400;transform:scaleX(1.1547);">در حال تأمین</span>
<span id="ty4" class="t" style="right:780.20px;top:677.00px;font-size:18px;line-height:18px;color:#3b3b3b;font-weight:400;transform:scaleX(1.0178);">مدرسه سازی</span>
<span id="pv4" class="t" style="right:480.50px;top:678.00px;font-size:18px;line-height:18px;color:#3b3b3b;font-weight:400;transform:scaleX(0.9552);">هرمزگان</span>
<span id="nm4" class="t" style="right:31.00px;top:662.00px;font-size:18px;line-height:18px;color:#3b3b3b;font-weight:400;transform:scaleX(1.0806);"><span class='num'>۳<i class='z'></i>۲</span> # هوشمندسازی مدارس استان هرمزگان(طرح</span>
<span id="nn4" class="t" style="right:31.00px;top:692.00px;font-size:18px;line-height:18px;color:#3b3b3b;font-weight:400;transform:scaleX(1.0104);">سراج)</span>
<div class="row" style="top:731px"></div>
<svg class="ic" style="left:64px;top:750px" width="200" height="36" viewBox="0 0 200 36" fill="none" stroke="#6b6b6b" stroke-width="1.6" stroke-linecap="round" stroke-linejoin="round">
<path d="M4.2 10.8c7-.7 14.4-.8 21.5 0"/><path d="M10.6 10.2l.6-2.6c.3-1.2.8-1.8 2.2-1.8h4c1.4 0 1.9.6 2.2 1.8l.6 2.6"/>
<path d="M7.1 14.2l.9 11.6c.2 1.8.6 2.7 3 2.7h8.2c2.4 0 2.8-.9 3-2.7l.9-11.6"/><path d="M11.5 18.1h7.1M12.3 22.5h5"/>
<path d="M40.1 6v23.3"/><path d="M40.1 8.1h13.6c2.6 0 3.3 1.4 1.6 3.4l-1.5 1.8c-.8 1-.8 2 0 3l1.5 1.8c1.7 2 1 3.6-1.6 3.6H40.1"/>
<path d="M76.5 5.2v4.6M85.4 5.2v4.6"/><path d="M86.2 29.3H75.8c-3.6 0-5.3-2-5.3-5.3V12.8c0-3.2 1.7-5.2 5.3-5.2h10.6c3.6 0 5.3 2 5.3 5.2v8.7z"/>
<path d="M91.7 21.5l-7.4 7.8v-3.2c0-3 1.4-4.6 4.4-4.6z"/><path d="M74.9 16.2h9.7M74.9 21h6.3"/>
<path d="M6.3 11.2h5M19.6 11.2h10.1M6.3 23.7h9.8M24.3 23.7h5.4" transform="translate(96 0)"/>
<circle cx="111.5" cy="11.2" r="4.1"/><circle cx="116.2" cy="23.7" r="4.1"/>
<g transform="translate(132.3 2.1) scale(1.22)" stroke-width="1.31"><path d="M13.26 3.6L5.05 12.29c-.31.33-.61.98-.67 1.43l-.37 3.24c-.13 1.17.71 1.97 1.87 1.77l3.22-.55c.45-.08 1.08-.41 1.39-.75l8.21-8.69c1.42-1.5 2.06-3.21-.15-5.3-2.2-2.07-3.87-1.34-5.29.16z"/><path d="M11.89 5.05a6.126 6.126 0 0 0 5.45 5.15M3 22h18"/></g>
<circle cx="179.8" cy="17.3" r="4.4"/>
<path d="M180 26.8c4.3 0 8.2-2.5 11-6.8 1-1.6 1-4.2 0-5.8-2.8-4.3-6.7-6.8-11-6.8s-8.2 2.5-11 6.8c-1 1.6-1 4.2 0 5.8 2.8 4.3 6.7 6.8 11 6.8z"/>
</svg>
<svg class="ic" style="left:350px;top:750px" width="70" height="35" viewBox="0 0 70 35">
<path d="M6.2 6.2L10.6 7.2 11.9 8.5 13.7 10.6 17.7 10.9 19 9.8 21.8 9 25.5 10.4 27.6 12.2 26.8 14.3 27.6 18.7 28.6 19.8 27.8 21.8 30.7 24.7 30.2 27.1 29.2 28.6 23.9 28.4 21.8 26.3 18.7 26.3 14.5 23.9 13 21.8 10.4 20.3 9.6 17.7 7 15.1 7.5 12.4 6.2 9.3z" fill="#12b986" stroke="#12b986" stroke-width="0.6" stroke-linejoin="round"/>
<path d="M52.9 6.9a6.1 6.1 0 0 0-6.1 6.1c0 3.6 3.4 6.6 6.1 8.8 2.7-2.2 6.1-5.2 6.1-8.8a6.1 6.1 0 0 0-6.1-6.1z" fill="#12b986"/>
<circle cx="52.9" cy="13" r="2.4" fill="none" stroke="#fff" stroke-width="1.3"/>
<path d="M42 13.2h3.4l3.6 8.8v3.7L42 27.9z" fill="#12b986"/>
<path d="M50 22.9h5.9v4.6H50z" fill="#12b986"/>
<path d="M57.3 18l3.8-5.4 2.7-.4v14.1l-6.5 1.6z" fill="#12b986"/>
</svg>
<svg class="ic" style="left:500px;top:750px" width="70" height="40" viewBox="0 0 70 40">
<path d="M11.4 10.1h15.9a3.2 3.2 0 0 1 3.2 3.2v2.4H8.2v-2.4a3.2 3.2 0 0 1 3.2-3.2z" fill="#8a8d93"/>
<path d="M8.2 18.1h22.3v3.6a6.3 6.3 0 0 0-8.5 6.9H12.2a4 4 0 0 1-4-4z" fill="#8a8d93"/>
<path d="M12 24.5h4" stroke="#fff" stroke-width="1.2"/>
<circle cx="27.3" cy="27.3" r="4.3" fill="#8a8d93"/>
<path d="M25.3 27.3l1.4 1.4 2.6-2.6" fill="none" stroke="#fff" stroke-width="1.3" stroke-linecap="round" stroke-linejoin="round"/>
<path d="M40.7 16.6v-3.4a5 5 0 0 1 5-5h13.1a5 5 0 0 1 5 5v3.4M40.7 22v3.5a5 5 0 0 0 5 5h13.1a5 5 0 0 0 5-5V22" fill="none" stroke="#1c9cc2" stroke-width="1.9" stroke-linecap="round"/>
<path d="M46.2 16l5.5-2.8 5.6 2.8-5.6 2.8z" fill="#17acd8"/>
<path d="M45.3 17.4l5.6 2.9v5.5l-5.6-2.9z" fill="#17acd8"/>
<path d="M52.5 20.3l5.7-2.9v5.6l-5.7 2.8z" fill="#17acd8"/>
</svg>
<span id="st5" class="t" style="right:1093.30px;top:761.00px;font-size:18px;line-height:18px;color:#3b3b3b;font-weight:400;transform:scaleX(1.1547);">در حال تأمین</span>
<span id="ty5" class="t" style="right:780.20px;top:761.00px;font-size:18px;line-height:18px;color:#3b3b3b;font-weight:400;transform:scaleX(1.0178);">مدرسه سازی</span>
<span id="pv5" class="t" style="right:480.50px;top:749.00px;font-size:18px;line-height:18px;color:#3b3b3b;font-weight:400;transform:scaleX(1.0000);">کرمانشاه</span>
<span id="ct5" class="t" style="right:480.50px;top:775.00px;font-size:16px;line-height:16px;color:#a0a4ab;font-weight:400;transform:scaleX(0.9516);">کرمانشاه</span>
<span id="nm5" class="t" style="right:31.00px;top:761.00px;font-size:18px;line-height:18px;color:#3b3b3b;font-weight:400;transform:scaleX(1.1200);">۵۶۱ # احداث مدرسه ۳ کلاسه روستای گاکیه</span>
<div class="row" style="top:815px"></div>
<svg class="ic" style="left:64px;top:834px" width="200" height="36" viewBox="0 0 200 36" fill="none" stroke="#6b6b6b" stroke-width="1.6" stroke-linecap="round" stroke-linejoin="round">
<path d="M4.2 10.8c7-.7 14.4-.8 21.5 0"/><path d="M10.6 10.2l.6-2.6c.3-1.2.8-1.8 2.2-1.8h4c1.4 0 1.9.6 2.2 1.8l.6 2.6"/>
<path d="M7.1 14.2l.9 11.6c.2 1.8.6 2.7 3 2.7h8.2c2.4 0 2.8-.9 3-2.7l.9-11.6"/><path d="M11.5 18.1h7.1M12.3 22.5h5"/>
<path d="M40.1 6v23.3"/><path d="M40.1 8.1h13.6c2.6 0 3.3 1.4 1.6 3.4l-1.5 1.8c-.8 1-.8 2 0 3l1.5 1.8c1.7 2 1 3.6-1.6 3.6H40.1"/>
<path d="M76.5 5.2v4.6M85.4 5.2v4.6"/><path d="M86.2 29.3H75.8c-3.6 0-5.3-2-5.3-5.3V12.8c0-3.2 1.7-5.2 5.3-5.2h10.6c3.6 0 5.3 2 5.3 5.2v8.7z"/>
<path d="M91.7 21.5l-7.4 7.8v-3.2c0-3 1.4-4.6 4.4-4.6z"/><path d="M74.9 16.2h9.7M74.9 21h6.3"/>
<path d="M6.3 11.2h5M19.6 11.2h10.1M6.3 23.7h9.8M24.3 23.7h5.4" transform="translate(96 0)"/>
<circle cx="111.5" cy="11.2" r="4.1"/><circle cx="116.2" cy="23.7" r="4.1"/>
<g transform="translate(132.3 2.1) scale(1.22)" stroke-width="1.31"><path d="M13.26 3.6L5.05 12.29c-.31.33-.61.98-.67 1.43l-.37 3.24c-.13 1.17.71 1.97 1.87 1.77l3.22-.55c.45-.08 1.08-.41 1.39-.75l8.21-8.69c1.42-1.5 2.06-3.21-.15-5.3-2.2-2.07-3.87-1.34-5.29.16z"/><path d="M11.89 5.05a6.126 6.126 0 0 0 5.45 5.15M3 22h18"/></g>
<circle cx="179.8" cy="17.3" r="4.4"/>
<path d="M180 26.8c4.3 0 8.2-2.5 11-6.8 1-1.6 1-4.2 0-5.8-2.8-4.3-6.7-6.8-11-6.8s-8.2 2.5-11 6.8c-1 1.6-1 4.2 0 5.8 2.8 4.3 6.7 6.8 11 6.8z"/>
</svg>
<svg class="ic" style="left:350px;top:834px" width="70" height="35" viewBox="0 0 70 35">
<path d="M6.2 6.2L10.6 7.2 11.9 8.5 13.7 10.6 17.7 10.9 19 9.8 21.8 9 25.5 10.4 27.6 12.2 26.8 14.3 27.6 18.7 28.6 19.8 27.8 21.8 30.7 24.7 30.2 27.1 29.2 28.6 23.9 28.4 21.8 26.3 18.7 26.3 14.5 23.9 13 21.8 10.4 20.3 9.6 17.7 7 15.1 7.5 12.4 6.2 9.3z" fill="#12b986" stroke="#12b986" stroke-width="0.6" stroke-linejoin="round"/>
<path d="M52.9 6.9a6.1 6.1 0 0 0-6.1 6.1c0 3.6 3.4 6.6 6.1 8.8 2.7-2.2 6.1-5.2 6.1-8.8a6.1 6.1 0 0 0-6.1-6.1z" fill="#12b986"/>
<circle cx="52.9" cy="13" r="2.4" fill="none" stroke="#fff" stroke-width="1.3"/>
<path d="M42 13.2h3.4l3.6 8.8v3.7L42 27.9z" fill="#12b986"/>
<path d="M50 22.9h5.9v4.6H50z" fill="#12b986"/>
<path d="M57.3 18l3.8-5.4 2.7-.4v14.1l-6.5 1.6z" fill="#12b986"/>
</svg>
<svg class="ic" style="left:500px;top:834px" width="70" height="40" viewBox="0 0 70 40">
<path d="M11.4 10.1h15.9a3.2 3.2 0 0 1 3.2 3.2v2.4H8.2v-2.4a3.2 3.2 0 0 1 3.2-3.2z" fill="#14b0d4"/>
<path d="M8.2 18.1h22.3v3.6a6.3 6.3 0 0 0-8.5 6.9H12.2a4 4 0 0 1-4-4z" fill="#14b0d4"/>
<path d="M12 24.5h4" stroke="#fff" stroke-width="1.2"/>
<circle cx="27.3" cy="27.3" r="4.3" fill="#14b0d4"/>
<path d="M25.3 27.3l1.4 1.4 2.6-2.6" fill="none" stroke="#fff" stroke-width="1.3" stroke-linecap="round" stroke-linejoin="round"/>
<path d="M40.7 16.6v-3.4a5 5 0 0 1 5-5h13.1a5 5 0 0 1 5 5v3.4M40.7 22v3.5a5 5 0 0 0 5 5h13.1a5 5 0 0 0 5-5V22" fill="none" stroke="#1c9cc2" stroke-width="1.9" stroke-linecap="round"/>
<path d="M46.2 16l5.5-2.8 5.6 2.8-5.6 2.8z" fill="#17acd8"/>
<path d="M45.3 17.4l5.6 2.9v5.5l-5.6-2.9z" fill="#17acd8"/>
<path d="M52.5 20.3l5.7-2.9v5.6l-5.7 2.8z" fill="#17acd8"/>
</svg>
<span id="st6" class="t" style="right:1093.30px;top:845.00px;font-size:18px;line-height:18px;color:#3b3b3b;font-weight:400;transform:scaleX(1.1547);">در حال تأمین</span>
<span id="ty6" class="t" style="right:780.20px;top:845.00px;font-size:18px;line-height:18px;color:#3b3b3b;font-weight:400;transform:scaleX(1.0178);">مدرسه سازی</span>
<span id="pv6" class="t" style="right:480.50px;top:833.00px;font-size:18px;line-height:18px;color:#3b3b3b;font-weight:400;transform:scaleX(1.0122);">تهران</span>
<span id="ct6" class="t" style="right:480.50px;top:859.00px;font-size:16px;line-height:16px;color:#a0a4ab;font-weight:400;transform:scaleX(1.0000);">تهران</span>
<span id="nm6" class="t" style="right:31.00px;top:845.00px;font-size:18px;line-height:18px;color:#3b3b3b;font-weight:400;transform:scaleX(1.0909);"><span class='num'>۳<i class='z'></i>۶</span> # مدرسه اولیا شهر تهران</span>
<div class="row" style="top:899px"></div>
<svg class="ic" style="left:64px;top:918px" width="200" height="36" viewBox="0 0 200 36" fill="none" stroke="#6b6b6b" stroke-width="1.6" stroke-linecap="round" stroke-linejoin="round">
<path d="M4.2 10.8c7-.7 14.4-.8 21.5 0"/><path d="M10.6 10.2l.6-2.6c.3-1.2.8-1.8 2.2-1.8h4c1.4 0 1.9.6 2.2 1.8l.6 2.6"/>
<path d="M7.1 14.2l.9 11.6c.2 1.8.6 2.7 3 2.7h8.2c2.4 0 2.8-.9 3-2.7l.9-11.6"/><path d="M11.5 18.1h7.1M12.3 22.5h5"/>
<path d="M40.1 6v23.3"/><path d="M40.1 8.1h13.6c2.6 0 3.3 1.4 1.6 3.4l-1.5 1.8c-.8 1-.8 2 0 3l1.5 1.8c1.7 2 1 3.6-1.6 3.6H40.1"/>
<path d="M76.5 5.2v4.6M85.4 5.2v4.6"/><path d="M86.2 29.3H75.8c-3.6 0-5.3-2-5.3-5.3V12.8c0-3.2 1.7-5.2 5.3-5.2h10.6c3.6 0 5.3 2 5.3 5.2v8.7z"/>
<path d="M91.7 21.5l-7.4 7.8v-3.2c0-3 1.4-4.6 4.4-4.6z"/><path d="M74.9 16.2h9.7M74.9 21h6.3"/>
<path d="M6.3 11.2h5M19.6 11.2h10.1M6.3 23.7h9.8M24.3 23.7h5.4" transform="translate(96 0)"/>
<circle cx="111.5" cy="11.2" r="4.1"/><circle cx="116.2" cy="23.7" r="4.1"/>
<g transform="translate(132.3 2.1) scale(1.22)" stroke-width="1.31"><path d="M13.26 3.6L5.05 12.29c-.31.33-.61.98-.67 1.43l-.37 3.24c-.13 1.17.71 1.97 1.87 1.77l3.22-.55c.45-.08 1.08-.41 1.39-.75l8.21-8.69c1.42-1.5 2.06-3.21-.15-5.3-2.2-2.07-3.87-1.34-5.29.16z"/><path d="M11.89 5.05a6.126 6.126 0 0 0 5.45 5.15M3 22h18"/></g>
<circle cx="179.8" cy="17.3" r="4.4"/>
<path d="M180 26.8c4.3 0 8.2-2.5 11-6.8 1-1.6 1-4.2 0-5.8-2.8-4.3-6.7-6.8-11-6.8s-8.2 2.5-11 6.8c-1 1.6-1 4.2 0 5.8 2.8 4.3 6.7 6.8 11 6.8z"/>
</svg>
<svg class="ic" style="left:350px;top:918px" width="70" height="35" viewBox="0 0 70 35">
<path d="M6.2 6.2L10.6 7.2 11.9 8.5 13.7 10.6 17.7 10.9 19 9.8 21.8 9 25.5 10.4 27.6 12.2 26.8 14.3 27.6 18.7 28.6 19.8 27.8 21.8 30.7 24.7 30.2 27.1 29.2 28.6 23.9 28.4 21.8 26.3 18.7 26.3 14.5 23.9 13 21.8 10.4 20.3 9.6 17.7 7 15.1 7.5 12.4 6.2 9.3z" fill="#12b986" stroke="#12b986" stroke-width="0.6" stroke-linejoin="round"/>
<path d="M52.9 6.9a6.1 6.1 0 0 0-6.1 6.1c0 3.6 3.4 6.6 6.1 8.8 2.7-2.2 6.1-5.2 6.1-8.8a6.1 6.1 0 0 0-6.1-6.1z" fill="#12b986"/>
<circle cx="52.9" cy="13" r="2.4" fill="none" stroke="#fff" stroke-width="1.3"/>
<path d="M42 13.2h3.4l3.6 8.8v3.7L42 27.9z" fill="#12b986"/>
<path d="M50 22.9h5.9v4.6H50z" fill="#12b986"/>
<path d="M57.3 18l3.8-5.4 2.7-.4v14.1l-6.5 1.6z" fill="#12b986"/>
</svg>
<svg class="ic" style="left:500px;top:918px" width="70" height="40" viewBox="0 0 70 40">
<path d="M11.4 10.1h15.9a3.2 3.2 0 0 1 3.2 3.2v2.4H8.2v-2.4a3.2 3.2 0 0 1 3.2-3.2z" fill="#8a8d93"/>
<path d="M8.2 18.1h22.3v3.6a6.3 6.3 0 0 0-8.5 6.9H12.2a4 4 0 0 1-4-4z" fill="#8a8d93"/>
<path d="M12 24.5h4" stroke="#fff" stroke-width="1.2"/>
<circle cx="27.3" cy="27.3" r="4.3" fill="#8a8d93"/>
<path d="M25.3 27.3l1.4 1.4 2.6-2.6" fill="none" stroke="#fff" stroke-width="1.3" stroke-linecap="round" stroke-linejoin="round"/>
<path d="M40.7 16.6v-3.4a5 5 0 0 1 5-5h13.1a5 5 0 0 1 5 5v3.4M40.7 22v3.5a5 5 0 0 0 5 5h13.1a5 5 0 0 0 5-5V22" fill="none" stroke="#1c9cc2" stroke-width="1.9" stroke-linecap="round"/>
<path d="M46.2 16l5.5-2.8 5.6 2.8-5.6 2.8z" fill="#17acd8"/>
<path d="M45.3 17.4l5.6 2.9v5.5l-5.6-2.9z" fill="#17acd8"/>
<path d="M52.5 20.3l5.7-2.9v5.6l-5.7 2.8z" fill="#17acd8"/>
</svg>
<span id="st7" class="t" style="right:1093.30px;top:929.00px;font-size:18px;line-height:18px;color:#3b3b3b;font-weight:400;transform:scaleX(1.1547);">در حال تأمین</span>
<span id="ty7" class="t" style="right:780.20px;top:929.00px;font-size:18px;line-height:18px;color:#3b3b3b;font-weight:400;transform:scaleX(1.0178);">مدرسه سازی</span>
<span id="pv7" class="t" style="right:480.50px;top:917.00px;font-size:18px;line-height:18px;color:#3b3b3b;font-weight:400;transform:scaleX(1.0054);">خراسان رضوی</span>
<span id="ct7" class="t" style="right:480.50px;top:943.00px;font-size:16px;line-height:16px;color:#a0a4ab;font-weight:400;transform:scaleX(1.0000);">رشتخوار</span>
<span id="nm7" class="t" style="right:31.00px;top:929.00px;font-size:18px;line-height:18px;color:#3b3b3b;font-weight:400;transform:scaleX(1.1260);">۳۲۱ # پویش درخت دانش رشتخوار</span>
<div class="row" style="top:983px"></div>
<svg class="ic" style="left:64px;top:1002px" width="200" height="36" viewBox="0 0 200 36" fill="none" stroke="#6b6b6b" stroke-width="1.6" stroke-linecap="round" stroke-linejoin="round">
<path d="M4.2 10.8c7-.7 14.4-.8 21.5 0"/><path d="M10.6 10.2l.6-2.6c.3-1.2.8-1.8 2.2-1.8h4c1.4 0 1.9.6 2.2 1.8l.6 2.6"/>
<path d="M7.1 14.2l.9 11.6c.2 1.8.6 2.7 3 2.7h8.2c2.4 0 2.8-.9 3-2.7l.9-11.6"/><path d="M11.5 18.1h7.1M12.3 22.5h5"/>
<path d="M40.1 6v23.3"/><path d="M40.1 8.1h13.6c2.6 0 3.3 1.4 1.6 3.4l-1.5 1.8c-.8 1-.8 2 0 3l1.5 1.8c1.7 2 1 3.6-1.6 3.6H40.1"/>
<path d="M76.5 5.2v4.6M85.4 5.2v4.6"/><path d="M86.2 29.3H75.8c-3.6 0-5.3-2-5.3-5.3V12.8c0-3.2 1.7-5.2 5.3-5.2h10.6c3.6 0 5.3 2 5.3 5.2v8.7z"/>
<path d="M91.7 21.5l-7.4 7.8v-3.2c0-3 1.4-4.6 4.4-4.6z"/><path d="M74.9 16.2h9.7M74.9 21h6.3"/>
<path d="M6.3 11.2h5M19.6 11.2h10.1M6.3 23.7h9.8M24.3 23.7h5.4" transform="translate(96 0)"/>
<circle cx="111.5" cy="11.2" r="4.1"/><circle cx="116.2" cy="23.7" r="4.1"/>
<g transform="translate(132.3 2.1) scale(1.22)" stroke-width="1.31"><path d="M13.26 3.6L5.05 12.29c-.31.33-.61.98-.67 1.43l-.37 3.24c-.13 1.17.71 1.97 1.87 1.77l3.22-.55c.45-.08 1.08-.41 1.39-.75l8.21-8.69c1.42-1.5 2.06-3.21-.15-5.3-2.2-2.07-3.87-1.34-5.29.16z"/><path d="M11.89 5.05a6.126 6.126 0 0 0 5.45 5.15M3 22h18"/></g>
<circle cx="179.8" cy="17.3" r="4.4"/>
<path d="M180 26.8c4.3 0 8.2-2.5 11-6.8 1-1.6 1-4.2 0-5.8-2.8-4.3-6.7-6.8-11-6.8s-8.2 2.5-11 6.8c-1 1.6-1 4.2 0 5.8 2.8 4.3 6.7 6.8 11 6.8z"/>
</svg>
<svg class="ic" style="left:350px;top:1002px" width="70" height="35" viewBox="0 0 70 35">
<path d="M6.2 6.2L10.6 7.2 11.9 8.5 13.7 10.6 17.7 10.9 19 9.8 21.8 9 25.5 10.4 27.6 12.2 26.8 14.3 27.6 18.7 28.6 19.8 27.8 21.8 30.7 24.7 30.2 27.1 29.2 28.6 23.9 28.4 21.8 26.3 18.7 26.3 14.5 23.9 13 21.8 10.4 20.3 9.6 17.7 7 15.1 7.5 12.4 6.2 9.3z" fill="#12b986" stroke="#12b986" stroke-width="0.6" stroke-linejoin="round"/>
<path d="M52.9 6.9a6.1 6.1 0 0 0-6.1 6.1c0 3.6 3.4 6.6 6.1 8.8 2.7-2.2 6.1-5.2 6.1-8.8a6.1 6.1 0 0 0-6.1-6.1z" fill="#12b986"/>
<circle cx="52.9" cy="13" r="2.4" fill="none" stroke="#fff" stroke-width="1.3"/>
<path d="M42 13.2h3.4l3.6 8.8v3.7L42 27.9z" fill="#12b986"/>
<path d="M50 22.9h5.9v4.6H50z" fill="#12b986"/>
<path d="M57.3 18l3.8-5.4 2.7-.4v14.1l-6.5 1.6z" fill="#12b986"/>
</svg>
<svg class="ic" style="left:500px;top:1002px" width="70" height="40" viewBox="0 0 70 40">
<path d="M11.4 10.1h15.9a3.2 3.2 0 0 1 3.2 3.2v2.4H8.2v-2.4a3.2 3.2 0 0 1 3.2-3.2z" fill="#14b0d4"/>
<path d="M8.2 18.1h22.3v3.6a6.3 6.3 0 0 0-8.5 6.9H12.2a4 4 0 0 1-4-4z" fill="#14b0d4"/>
<path d="M12 24.5h4" stroke="#fff" stroke-width="1.2"/>
<circle cx="27.3" cy="27.3" r="4.3" fill="#14b0d4"/>
<path d="M25.3 27.3l1.4 1.4 2.6-2.6" fill="none" stroke="#fff" stroke-width="1.3" stroke-linecap="round" stroke-linejoin="round"/>
<path d="M40.7 16.6v-3.4a5 5 0 0 1 5-5h13.1a5 5 0 0 1 5 5v3.4M40.7 22v3.5a5 5 0 0 0 5 5h13.1a5 5 0 0 0 5-5V22" fill="none" stroke="#1c9cc2" stroke-width="1.9" stroke-linecap="round"/>
<path d="M46.2 16l5.5-2.8 5.6 2.8-5.6 2.8z" fill="#17acd8"/>
<path d="M45.3 17.4l5.6 2.9v5.5l-5.6-2.9z" fill="#17acd8"/>
<path d="M52.5 20.3l5.7-2.9v5.6l-5.7 2.8z" fill="#17acd8"/>
</svg>
<span id="st8" class="t" style="right:1093.30px;top:1013.00px;font-size:18px;line-height:18px;color:#3b3b3b;font-weight:400;transform:scaleX(1.1547);">در حال تأمین</span>
<span id="ty8" class="t" style="right:780.20px;top:1013.00px;font-size:18px;line-height:18px;color:#3b3b3b;font-weight:400;transform:scaleX(1.0178);">مدرسه سازی</span>
<span id="pv8" class="t" style="right:480.50px;top:1014.00px;font-size:18px;line-height:18px;color:#3b3b3b;font-weight:400;transform:scaleX(1.0642);">خوزستان</span>
<span id="nm8" class="t" style="right:31.00px;top:998.00px;font-size:18px;line-height:18px;color:#3b3b3b;font-weight:400;transform:scaleX(1.1309);">۷۶ # تامین تجهیزات هوشمند سازی کلاس های درس</span>
<span id="nn8" class="t" style="right:31.00px;top:1028.00px;font-size:18px;line-height:18px;color:#3b3b3b;font-weight:400;transform:scaleX(1.1000);">استان خوزستان</span>
<div class="row" style="top:1067px"></div>
<svg class="ic" style="left:64px;top:1086px" width="200" height="36" viewBox="0 0 200 36" fill="none" stroke="#6b6b6b" stroke-width="1.6" stroke-linecap="round" stroke-linejoin="round">
<path d="M4.2 10.8c7-.7 14.4-.8 21.5 0"/><path d="M10.6 10.2l.6-2.6c.3-1.2.8-1.8 2.2-1.8h4c1.4 0 1.9.6 2.2 1.8l.6 2.6"/>
<path d="M7.1 14.2l.9 11.6c.2 1.8.6 2.7 3 2.7h8.2c2.4 0 2.8-.9 3-2.7l.9-11.6"/><path d="M11.5 18.1h7.1M12.3 22.5h5"/>
<path d="M40.1 6v23.3"/><path d="M40.1 8.1h13.6c2.6 0 3.3 1.4 1.6 3.4l-1.5 1.8c-.8 1-.8 2 0 3l1.5 1.8c1.7 2 1 3.6-1.6 3.6H40.1"/>
<path d="M76.5 5.2v4.6M85.4 5.2v4.6"/><path d="M86.2 29.3H75.8c-3.6 0-5.3-2-5.3-5.3V12.8c0-3.2 1.7-5.2 5.3-5.2h10.6c3.6 0 5.3 2 5.3 5.2v8.7z"/>
<path d="M91.7 21.5l-7.4 7.8v-3.2c0-3 1.4-4.6 4.4-4.6z"/><path d="M74.9 16.2h9.7M74.9 21h6.3"/>
<path d="M6.3 11.2h5M19.6 11.2h10.1M6.3 23.7h9.8M24.3 23.7h5.4" transform="translate(96 0)"/>
<circle cx="111.5" cy="11.2" r="4.1"/><circle cx="116.2" cy="23.7" r="4.1"/>
<g transform="translate(132.3 2.1) scale(1.22)" stroke-width="1.31"><path d="M13.26 3.6L5.05 12.29c-.31.33-.61.98-.67 1.43l-.37 3.24c-.13 1.17.71 1.97 1.87 1.77l3.22-.55c.45-.08 1.08-.41 1.39-.75l8.21-8.69c1.42-1.5 2.06-3.21-.15-5.3-2.2-2.07-3.87-1.34-5.29.16z"/><path d="M11.89 5.05a6.126 6.126 0 0 0 5.45 5.15M3 22h18"/></g>
<circle cx="179.8" cy="17.3" r="4.4"/>
<path d="M180 26.8c4.3 0 8.2-2.5 11-6.8 1-1.6 1-4.2 0-5.8-2.8-4.3-6.7-6.8-11-6.8s-8.2 2.5-11 6.8c-1 1.6-1 4.2 0 5.8 2.8 4.3 6.7 6.8 11 6.8z"/>
</svg>
<svg class="ic" style="left:350px;top:1086px" width="70" height="35" viewBox="0 0 70 35">
<path d="M6.2 6.2L10.6 7.2 11.9 8.5 13.7 10.6 17.7 10.9 19 9.8 21.8 9 25.5 10.4 27.6 12.2 26.8 14.3 27.6 18.7 28.6 19.8 27.8 21.8 30.7 24.7 30.2 27.1 29.2 28.6 23.9 28.4 21.8 26.3 18.7 26.3 14.5 23.9 13 21.8 10.4 20.3 9.6 17.7 7 15.1 7.5 12.4 6.2 9.3z" fill="#12b986" stroke="#12b986" stroke-width="0.6" stroke-linejoin="round"/>
<path d="M52.9 6.9a6.1 6.1 0 0 0-6.1 6.1c0 3.6 3.4 6.6 6.1 8.8 2.7-2.2 6.1-5.2 6.1-8.8a6.1 6.1 0 0 0-6.1-6.1z" fill="#12b986"/>
<circle cx="52.9" cy="13" r="2.4" fill="none" stroke="#fff" stroke-width="1.3"/>
<path d="M42 13.2h3.4l3.6 8.8v3.7L42 27.9z" fill="#12b986"/>
<path d="M50 22.9h5.9v4.6H50z" fill="#12b986"/>
<path d="M57.3 18l3.8-5.4 2.7-.4v14.1l-6.5 1.6z" fill="#12b986"/>
</svg>
<svg class="ic" style="left:500px;top:1086px" width="70" height="40" viewBox="0 0 70 40">
<path d="M11.4 10.1h15.9a3.2 3.2 0 0 1 3.2 3.2v2.4H8.2v-2.4a3.2 3.2 0 0 1 3.2-3.2z" fill="#14b0d4"/>
<path d="M8.2 18.1h22.3v3.6a6.3 6.3 0 0 0-8.5 6.9H12.2a4 4 0 0 1-4-4z" fill="#14b0d4"/>
<path d="M12 24.5h4" stroke="#fff" stroke-width="1.2"/>
<circle cx="27.3" cy="27.3" r="4.3" fill="#14b0d4"/>
<path d="M25.3 27.3l1.4 1.4 2.6-2.6" fill="none" stroke="#fff" stroke-width="1.3" stroke-linecap="round" stroke-linejoin="round"/>
<path d="M40.7 16.6v-3.4a5 5 0 0 1 5-5h13.1a5 5 0 0 1 5 5v3.4M40.7 22v3.5a5 5 0 0 0 5 5h13.1a5 5 0 0 0 5-5V22" fill="none" stroke="#1c9cc2" stroke-width="1.9" stroke-linecap="round"/>
<path d="M46.2 16l5.5-2.8 5.6 2.8-5.6 2.8z" fill="#17acd8"/>
<path d="M45.3 17.4l5.6 2.9v5.5l-5.6-2.9z" fill="#17acd8"/>
<path d="M52.5 20.3l5.7-2.9v5.6l-5.7 2.8z" fill="#17acd8"/>
</svg>
<span id="st9" class="t" style="right:1093.30px;top:1097.00px;font-size:18px;line-height:18px;color:#3b3b3b;font-weight:400;transform:scaleX(1.1547);">در حال تأمین</span>
<span id="ty9" class="t" style="right:780.20px;top:1097.00px;font-size:18px;line-height:18px;color:#3b3b3b;font-weight:400;transform:scaleX(1.0178);">مدرسه سازی</span>
<span id="pv9" class="t" style="right:480.50px;top:1098.00px;font-size:18px;line-height:18px;color:#3b3b3b;font-weight:400;transform:scaleX(1.0114);">زنجان</span>
<span id="nm9" class="t" style="right:31.00px;top:1082.00px;font-size:18px;line-height:18px;color:#3b3b3b;font-weight:400;transform:scaleX(1.1361);">۷۸ # تامین تجهیزات هوشمندسازی کلاس های درس</span>
<span id="nn9" class="t" style="right:31.00px;top:1112.00px;font-size:18px;line-height:18px;color:#3b3b3b;font-weight:400;transform:scaleX(1.0717);">استان زنجان</span>
<script>(function(){var W={"title": 238, "b1": 108, "b2": 118, "b3": 127.4, "s": 87.2, "f1": 146.6, "f2": 110.5, "f3": 121.3, "h1": 151, "h2": 50, "h2b": 65, "h3": 78.5, "h4": 67, "h5": 103.5, "h6": 107, "h7": 62.7, "st0": 109.7, "ty0": 102.8, "pv0": 71, "ct0": 53, "nm0": 357.5, "st1": 109.7, "ty1": 102.8, "pv1": 70, "ct1": 41, "nm1": 381, "st2": 109.7, "ty2": 102.8, "pv2": 169.5, "ct2": 47.5, "nm2": 365, "st3": 109.7, "ty3": 102.8, "pv3": 41.5, "ct3": 38.5, "nm3": 131, "st4": 109.7, "ty4": 102.8, "pv4": 64, "nm4": 402, "nn4": 48.5, "st5": 109.7, "ty5": 102.8, "pv5": 69, "ct5": 59, "nm5": 364, "st6": 109.7, "ty6": 102.8, "pv6": 41.5, "ct6": 36, "nm6": 240, "st7": 109.7, "ty7": 102.8, "pv7": 111.6, "ct7": 56, "nm7": 290.5, "st8": 109.7, "ty8": 102.8, "pv8": 71.3, "nm8": 432, "nn8": 126.5, "st9": 109.7, "ty9": 102.8, "pv9": 44.5, "nm9": 428.3, "nn9": 98.6};for(var k in W){var e=document.getElementById(k);if(e&&e.offsetWidth>0){e.style.transform="scaleX("+(W[k]/e.offsetWidth).toFixed(4)+")";}}})();</script>
</body></html>
